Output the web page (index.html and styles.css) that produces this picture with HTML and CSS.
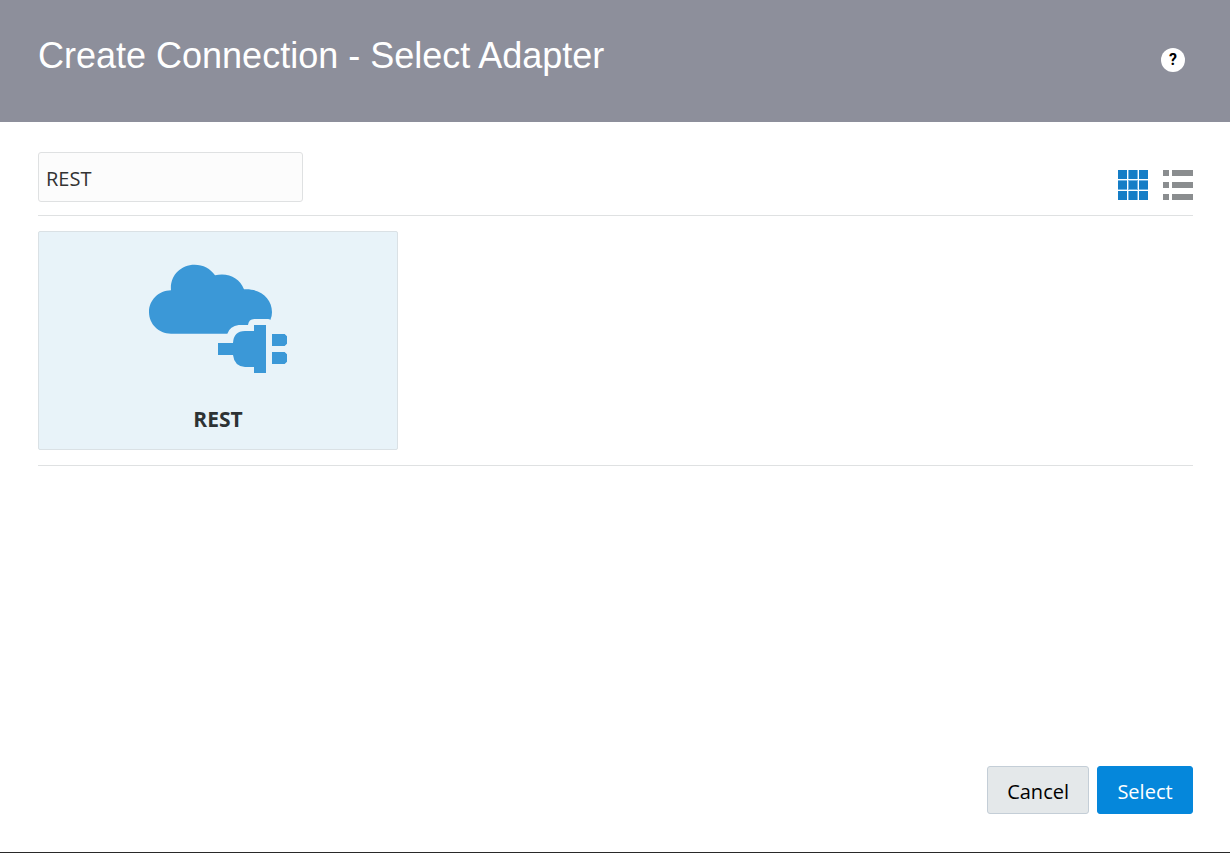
FILE: index.html
```html
<!DOCTYPE html>
<html lang="en">
<head>
<meta charset="utf-8">
<meta name="viewport" content="width=device-width, initial-scale=1">
<title>Create Connection - Select Adapter</title>
<link rel="stylesheet" href="styles.css">
</head>
<body>
<div class="dialog">
  <header class="header">
    <h1 class="title">Create Connection - Select Adapter</h1>
    <button class="help" type="button" aria-label="Help">?</button>
  </header>
  <main class="content">
    <div class="toolbar">
      <input class="search" type="text" value="REST" aria-label="Search adapters">
      <div class="views">
        <button class="view" type="button" aria-label="Grid view" aria-pressed="true">
          <svg width="30" height="30" viewBox="0 0 30 30" aria-hidden="true">
            <path fill="#157dc6" d="M0 0h30v30H0z"/>
            <path fill="#6fb3e4" d="M10 0h1v30h-1zM19 0h1v30h-1zM0 10h30v1H0zM0 19h30v1H0z"/>
            <path fill="#fff" d="M9 0h1v30H9zM20 0h1v30h-1zM0 9h30v1H0zM0 20h30v1H0z"/>
          </svg>
        </button>
        <button class="view" type="button" aria-label="List view" aria-pressed="false">
          <svg width="30" height="30" viewBox="0 0 30 30" aria-hidden="true">
            <path fill="#8a8d8f" d="M0 0h6v6H0zM9 0h21v6H9zM0 12h6v6H0zM9 12h21v6H9zM0 24h6v6H0zM9 24h21v6H9z"/>
          </svg>
        </button>
      </div>
    </div>
    <div class="adapters">
      <button class="card" type="button" aria-pressed="true">
        <svg width="138" height="110" viewBox="57 42 414 330" aria-hidden="true">
          <g fill="#3b98d7">
            <path d="M123 251C86 251 57 222 57 186C57 150 86 122 123 121C119 78 151 44 194 44C219 44 242 56 255 76C295 67 329 84 342 118C390 115 426 144 426 187Q426 200 421 210Q419 207 414 207H373Q356 207 354 225H326Q300 228 292 251Z"/>
            <path d="M264 279H309Q311 243 345 243H372V225H408V369H372V351H345Q313 349 309 315H264Z"/>
            <path d="M426 252H464L471 259V281L464 288H426ZM426 306H464L471 313V335L464 342H426Z"/>
          </g>
        </svg>
        <span class="card-name">REST</span>
      </button>
    </div>
  </main>
  <footer class="footer">
    <button class="button" type="button">Cancel</button>
    <button class="button primary" type="button">Select</button>
  </footer>
</div>
</body>
</html>
```

FILE: styles.css
```css
* {
  box-sizing: border-box;
}

body {
  margin: 0;
  background: #fff;
  color: #333;
  font-family: "Segoe UI", "Open Sans", "Noto Sans", sans-serif;
  font-size: 20px;
  line-height: 28px;
}

button,
input {
  margin: 0;
  font: inherit;
}

button {
  cursor: pointer;
}

.dialog {
  display: flex;
  flex-direction: column;
  min-height: 100vh;
  border-bottom: 1px solid #292929;
}

.header {
  display: flex;
  align-items: flex-start;
  justify-content: space-between;
  padding: 32px 45px 42px 38px;
  background: #8d8f9b;
}

.title {
  margin: 0;
  color: #fff;
  font-family: "Liberation Sans", Arial, sans-serif;
  font-size: 36px;
  font-weight: 400;
  line-height: 48px;
}

.help {
  width: 24px;
  height: 24px;
  margin-top: 16px;
  padding: 0;
  border: 0;
  border-radius: 50%;
  background: #fff;
  color: #000;
  font-family: Roboto, sans-serif;
  font-size: 16px;
  font-weight: 700;
  line-height: 24px;
}

.content {
  flex: 1;
  padding: 30px 37px 30px 38px;
}

.toolbar {
  display: flex;
  align-items: flex-end;
  justify-content: space-between;
  padding-bottom: 13px;
  border-bottom: 1px solid #dfe1e2;
}

.search {
  width: 265px;
  height: 50px;
  padding: 2px 7px 0;
  border: 1px solid #dfe1e2;
  border-radius: 3px;
  background: #fcfcfc;
  color: #333;
}

.views {
  display: flex;
  gap: 15px;
  padding-bottom: 2px;
}

.view {
  display: flex;
  padding: 0;
  border: 0;
  background: none;
}

.adapters {
  display: flex;
  flex-wrap: wrap;
  gap: 15px;
  padding: 15px 0;
  border-bottom: 1px solid #dfe1e2;
}

.card {
  display: flex;
  flex-direction: column;
  align-items: center;
  gap: 31px;
  width: 360px;
  padding: 32px 16px 16px;
  border: 1px solid #dae1e5;
  border-radius: 2px;
  background: #e8f3f9;
  color: #2d3234;
}

.card-name {
  font-size: 21px;
  font-weight: 700;
}

.footer {
  display: flex;
  justify-content: flex-end;
  gap: 8px;
  padding: 0 37px 38px;
}

.button {
  min-width: 96px;
  height: 48px;
  padding: 4px 19px 0;
  border: 1px solid #c4ced7;
  border-radius: 3px;
  background: #e4e8ea;
  color: #000;
}

.primary {
  border-color: #0587db;
  background: #0587db;
  color: #fff;
}
```
